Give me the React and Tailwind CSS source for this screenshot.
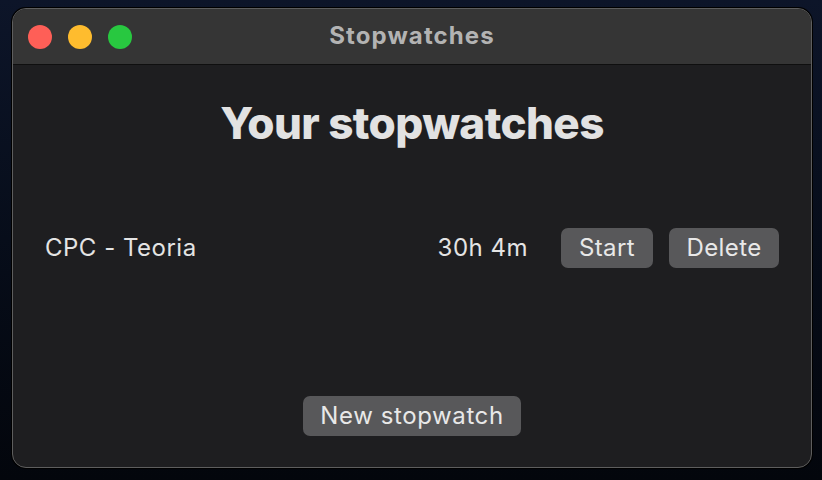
export default function App() {
  return (
    <div className="w-[822px] h-[480px] bg-gradient-to-b from-[#0d1529] to-[#03060c] pt-[8px] pl-[12px] font-['Inter','Liberation_Sans',sans-serif]">
      <div className="w-[800px] h-[460px] rounded-[14px] border border-[#5e5e5e] bg-[#1e1e20] overflow-hidden flex flex-col shadow-[0_0_0_1px_#000]">
        {/* title bar */}
        <div className="h-[56px] bg-[#353535] border-b border-[#0f0f0f] flex items-center relative">
          <div className="flex gap-[16px] pl-[15px]">
            <span className="w-[24px] h-[24px] rounded-full bg-[#fe5f57]" />
            <span className="w-[24px] h-[24px] rounded-full bg-[#febc2e]" />
            <span className="w-[24px] h-[24px] rounded-full bg-[#28c840]" />
          </div>
          <div className="absolute inset-0 flex items-center justify-center text-[#b3b3b3] font-bold text-[24px] tracking-[1.1px] pb-[2px]">
            Stopwatches
          </div>
        </div>

        {/* content */}
        <div className="flex-1 flex flex-col items-center text-[#e4e4e4]">
          <h1 className="mt-[31px] text-[44px] font-extrabold tracking-[-0.6px] leading-[54px] text-[#e2e2e2]">Your stopwatches</h1>

          <div className="mt-[78px] w-full flex items-center pl-[32px] pr-[32px] text-[24px] tracking-[0.5px]">
            <span className="flex-1">CPC - Teoria</span>
            <span className="mr-[33px]">30h 4m</span>
            <button className="h-[40px] w-[92px] rounded-[7px] bg-[#58585a] text-[#e8e8e8] mr-[16px] tracking-[0.4px]">Start</button>
            <button className="h-[40px] w-[110px] rounded-[7px] bg-[#58585a] text-[#e8e8e8] tracking-[0.4px]">Delete</button>
          </div>

          <button className="mt-[128px] h-[40px] w-[218px] rounded-[7px] bg-[#58585a] text-[#e8e8e8] text-[24px] tracking-[0.6px]">New stopwatch</button>
        </div>
      </div>
    </div>
  );
}
